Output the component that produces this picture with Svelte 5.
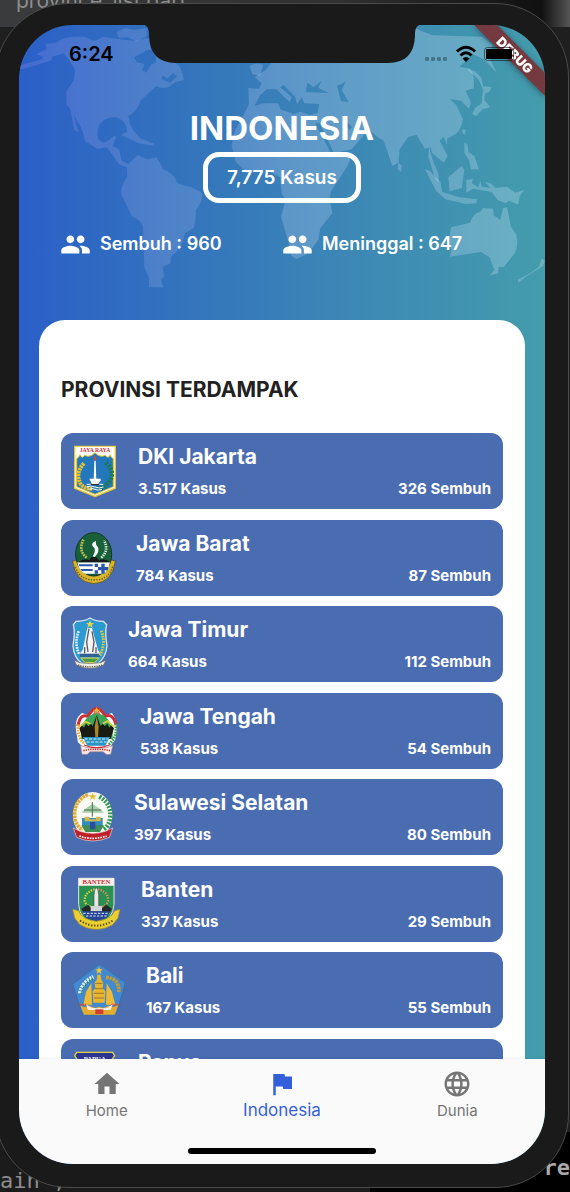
<script>
  const provinces = [
    { id: 'jakarta', name: 'DKI Jakarta', cases: '3.517', healed: 326, w: 46, box: '36 42 138 162' },
    { id: 'jabar', name: 'Jawa Barat', cases: '784', healed: 87, w: 44, box: '36 302 132 162' },
    { id: 'jatim', name: 'Jawa Timur', cases: '664', healed: 112, w: 36, box: '36 45 108 162' },
    { id: 'jateng', name: 'Jawa Tengah', cases: '538', healed: 54, w: 48, box: '36 305 144 162' },
    { id: 'sulsel', name: 'Sulawesi Selatan', cases: '397', healed: 80, w: 42, box: '36 42 126 162' },
    { id: 'banten', name: 'Banten', cases: '337', healed: 29, w: 49, box: '36 301 147 162' },
    { id: 'bali', name: 'Bali', cases: '167', healed: 55, w: 54, box: '36 45 162 162' },
    { id: 'papua', name: 'Papua', cases: '124', healed: 26, w: 46, box: '36 303 138 162' }
  ];
  const tabs = [
    { label: 'Home', path: 'M10 20v-6h4v6h5v-8h3L12 3 2 12h3v8z' },
    { label: 'Indonesia', active: true, path: 'M14.4 6L14 4H5v17h2v-7h5.6l.4 2h7V6z' },
    { label: 'Dunia', path: 'M11.99 2C6.47 2 2 6.48 2 12s4.47 10 9.99 10C17.52 22 22 17.52 22 12S17.52 2 11.99 2zm6.93 6h-2.95c-.32-1.25-.78-2.45-1.38-3.56 1.84.63 3.37 1.91 4.33 3.56zM12 4.04c.83 1.2 1.48 2.53 1.91 3.96h-3.82c.43-1.43 1.08-2.76 1.91-3.96zM4.26 14C4.1 13.36 4 12.69 4 12s.1-1.36.26-2h3.38c-.08.66-.14 1.32-.14 2 0 .68.06 1.34.14 2H4.26zm.82 2h2.95c.32 1.25.78 2.45 1.38 3.56-1.84-.63-3.37-1.9-4.33-3.56zm2.95-8H5.08c.96-1.66 2.49-2.93 4.33-3.56C8.81 5.55 8.35 6.75 8.03 8zM12 19.96c-.83-1.2-1.48-2.53-1.91-3.96h3.82c-.43 1.43-1.08 2.76-1.91 3.96zM14.34 14H9.66c-.09-.66-.16-1.32-.16-2 0-.68.07-1.35.16-2h4.68c.09.65.16 1.32.16 2 0 .68-.07 1.34-.16 2zm.25 5.56c.6-1.11 1.06-2.31 1.38-3.56h2.95c-.96 1.65-2.49 2.93-4.33 3.56zM16.36 14c.08-.66.14-1.32.14-2 0-.68-.06-1.34-.14-2h3.38c.16.64.26 1.31.26 2s-.1 1.36-.26 2h-3.38z' }
  ];
  const totals = [['Sembuh', 960], ['Meninggal', 647]];
</script>

{#snippet emblem(id)}
  {#if id === 'jakarta'}
    <path d="M42 47H168V176L105 202L42 176Z" fill="#e8c52b" />
    <path d="M46 50H164V173L105 197L46 173Z" fill="#fff" />
    <path d="M50 86Q56 84 60 74Q66 88 74 76Q90 84 105 68Q120 84 136 76Q146 88 150 74Q154 84 160 86V170L105 193L50 170Z" fill="#2377bd" stroke="#e8c52b" stroke-width="3" />
    <text x="105" y="65" text-anchor="middle" font-size="17" class="tiny" fill="#d22b35">JAYA RAYA</text>
    <path d="M72 100Q44 130 62 162Q76 178 98 176" fill="none" stroke="#e3c135" stroke-width="12" stroke-dasharray="7 2" />
    <path d="M138 98Q168 126 146 158Q130 176 112 176" fill="none" stroke="#1d7a4b" stroke-width="14" stroke-dasharray="6 4" />
    <path d="M101 150L103 92H107L109 150ZM88 146H122V152L114 162H96Z" fill="#fff" />
    <path d="M105 76L109 86L105 93L101 86Z" fill="#d9452e" />
    <path d="M80 163H130M80 171Q92 165 105 171T130 171M86 178Q96 173 105 178T126 178" stroke="#fff" stroke-width="3" fill="none" />
    <path d="M92 164H118" stroke="#333" stroke-width="4" />
  {:else if id === 'jabar'}
    <path d="M38 392Q46 456 102 460Q158 456 166 392L150 388Q144 434 102 436Q58 434 54 388Z" fill="#d7b52c" stroke="#4d4317" stroke-width="2" />
    <ellipse cx="101" cy="372" rx="54" ry="65" fill="#176038" stroke="#17351f" stroke-width="3" />
    <path d="M52 396H150Q146 420 130 430H74Q56 420 52 396Z" fill="#fff" />
    <path d="M56 402H98V408H58ZM61 416H98V422H66ZM104 400H114V410H124V400H134V410H144V420H134V430H124V420H114V430H104V420H114V410H104Z" fill="#2956a8" />
    <path d="M54 396Q74 382 88 390L94 380H108L118 390Q134 382 150 396Z" fill="#18191b" />
    <path d="M98 378Q112 358 98 348Q92 338 108 332Q106 344 114 350Q120 364 104 380Z" fill="#fff" />
    <path d="M80 382Q54 362 70 328" fill="none" stroke="#c4c653" stroke-width="8" stroke-dasharray="5 3" />
    <path d="M124 382Q148 360 132 330" fill="none" stroke="#e7efe5" stroke-width="8" stroke-dasharray="4 3" />
    <path d="M46 410Q58 448 102 449T158 408" fill="none" stroke="#6a5a1e" stroke-width="4" stroke-dasharray="4 4" />
  {:else if id === 'jatim'}
    <path d="M90 48Q106 58 130 58L140 68Q134 90 141 132Q138 166 114 184H66Q42 168 39 132Q46 90 40 68L48 58Q74 58 90 48Z" fill="#2b9ad2" stroke="#dce6ed" stroke-width="4" />
    <path d="M90 54L93 63H102L95 69L98 78L90 72L82 78L85 69L78 63H87Z" fill="#e6d64d" />
    <path d="M82 78H96L114 144L122 156H58L68 144Z" fill="#f4f4f3" />
    <path d="M87 80L80 120L84 150M96 88L102 120L98 150M74 136V154M108 136V154" stroke="#595b63" stroke-width="4" fill="none" />
    <path d="M60 155H120V165H60Z" fill="#32619a" />
    <path d="M62 168H118L104 182H76Z" fill="#4e9b48" stroke="#e9dc52" stroke-width="3" />
    <path d="M56 88Q42 124 58 158" fill="none" stroke="#eef1ec" stroke-width="8" stroke-dasharray="5 3" />
    <path d="M124 86Q138 124 120 160" fill="none" stroke="#d8c93c" stroke-width="9" stroke-dasharray="5 3" />
    <path d="M42 174L58 182Q90 188 122 182L138 174L130 190Q90 208 50 190Z" fill="#f2efe6" stroke="#6b6658" stroke-width="2" />
    <path d="M54 189Q90 200 126 189" fill="none" stroke="#5d5546" stroke-width="4" stroke-dasharray="4 3" />
  {:else if id === 'jateng'}
    <path d="M50 396Q40 350 66 332L84 338L110 316L138 338L156 332Q178 360 166 412L148 436H72L54 420Z" fill="#fff" />
    <path d="M54 372Q60 332 84 342Q100 316 110 320Q120 316 136 342Q160 332 168 368" fill="none" stroke="#cd2d36" stroke-width="9" />
    <path d="M64 386Q68 342 110 332Q152 342 158 386V410H62Z" fill="#38a858" />
    <path d="M110 312L114 321H124L116 327L119 336L110 330L101 336L104 327L96 321H106Z" fill="#e2b937" stroke="#c32c31" stroke-width="2" />
    <path d="M58 378L66 368L72 376L78 364L86 372L92 362L98 372L110 338L122 372L128 362L134 372L142 364L148 376L154 368L162 378L152 410H68Z" fill="#191a12" />
    <path d="M58 374L76 358L92 364M128 364L142 356L162 374" fill="none" stroke="#e5cf38" stroke-width="5" />
    <path d="M106 404L104 374L110 340L116 374L114 404Z" fill="#a58725" />
    <path d="M68 404H150L136 430H82Z" fill="#2893c5" />
    <path d="M74 410H146M80 419H140" stroke="#d7f0f3" stroke-width="3" stroke-dasharray="9 4" />
    <path d="M54 366Q52 412 76 424" fill="none" stroke="#e2aa3a" stroke-width="9" stroke-dasharray="5 3" />
    <path d="M168 364Q172 410 146 426" fill="none" stroke="#3a9c51" stroke-width="9" stroke-dasharray="5 3" />
    <path d="M62 430L84 436H136L158 430L152 456H138L130 448H90L82 456H66Z" fill="#f6ece8" stroke="#ba8b86" stroke-width="2" />
    <path d="M70 445L90 441H130L150 445" fill="none" stroke="#be3237" stroke-width="5" stroke-dasharray="4 3" />
    <path d="M72 428Q110 444 148 428" fill="none" stroke="#cc3034" stroke-width="4" />
  {:else if id === 'sulsel'}
    <ellipse cx="98" cy="118" rx="59" ry="70" fill="#faf9f4" />
    <path d="M84 56Q40 74 44 122Q46 148 68 162" fill="none" stroke="#dfac35" stroke-width="11" stroke-dasharray="8 2" />
    <path d="M118 62Q158 84 150 130Q146 150 130 160" fill="none" stroke="#2f9a51" stroke-width="14" stroke-dasharray="6 4" />
    <path d="M98 50L101 58H110L103 64L106 72L98 67L90 72L93 64L86 58H95Z" fill="#e7bd33" />
    <path d="M64 110L84 92L98 84L116 96L132 110Z" fill="#a5cfa9" />
    <path d="M97 78V122M72 102H124" stroke="#4a6c56" stroke-width="3" />
    <path d="M66 126H128V150H66Z" fill="#328dc1" />
    <path d="M74 122H88V130H108V122H122V136H74Z" fill="#d6b74b" />
    <path d="M64 148H132L120 168H76Z" fill="#3f8e54" />
    <path d="M90 138H106V160H90Z" fill="#2d4d9d" />
    <path d="M40 156L60 166Q98 178 136 166L158 156L148 184Q98 206 50 184Z" fill="#bd2028" stroke="#f2d8d2" stroke-width="2" />
    <path d="M58 180Q98 194 140 180" fill="none" stroke="#fff" stroke-width="5" stroke-dasharray="5 3" />
  {:else if id === 'banten'}
    <path d="M56 305H162V384Q160 430 109 444Q58 430 56 384Z" fill="#2a9151" stroke="#e7e5d9" stroke-width="3" />
    <path d="M56 305H162V327H56Z" fill="#f7f3ec" />
    <text x="109" y="323" text-anchor="middle" font-size="20" class="tiny" fill="#cc3038">BANTEN</text>
    <path d="M104 338Q74 346 74 372Q78 388 98 392" fill="none" stroke="#ded545" stroke-width="7" stroke-dasharray="4 4" />
    <path d="M114 338Q146 346 144 372Q140 388 122 392" fill="none" stroke="#e98b6b" stroke-width="7" stroke-dasharray="4 4" />
    <path d="M64 396L84 384L96 396H124L138 384L156 396L148 410H72Z" fill="#242927" />
    <path d="M104 340L109 332L114 340L116 356V398H102V356Z" fill="#e8e8e6" stroke="#555" stroke-width="2" />
    <path d="M92 388H126V404H92Z" fill="#d2d6d8" />
    <path d="M66 404H150L140 424L109 434L78 424Z" fill="#27469a" />
    <path d="M70 410H148M78 418H140" stroke="#e7ebee" stroke-width="3" stroke-dasharray="7 4" />
    <path d="M38 398L56 402Q64 428 109 434Q154 428 164 402L180 398L174 424L158 444Q109 472 60 444L44 424Z" fill="#e9cf32" stroke="#a58d24" stroke-width="2" />
    <path d="M60 432Q109 462 158 432" fill="none" stroke="#514914" stroke-width="6" stroke-dasharray="4 5" />
  {:else if id === 'bali'}
    <path d="M118 48L197 104L168 201H68L38 108Z" fill="#4389cf" stroke="#3a6ea5" stroke-width="3" />
    <path d="M117 56L120 64H128L122 70L124 78L117 73L110 78L112 70L106 64H114Z" fill="#f0c636" />
    <path d="M60 136Q66 104 100 86" fill="none" stroke="#e9f3ed" stroke-width="12" stroke-dasharray="6 3" />
    <path d="M64 138Q70 108 102 90" fill="none" stroke="#268052" stroke-width="5" stroke-dasharray="5 4" />
    <path d="M138 88Q180 92 176 132" fill="none" stroke="#c69b34" stroke-width="11" stroke-dasharray="8 2" />
    <path d="M112 80H122L124 96L130 104L128 120L136 130L134 164H100L98 130L106 120L104 104L110 96Z" fill="#e9b52f" />
    <path d="M94 106L96 170H70L78 132ZM140 106L138 170H166L156 132Z" fill="#edbb36" />
    <path d="M106 106H128M104 122H130M102 136H132M102 150H132" stroke="#9b7528" stroke-width="3" />
    <path d="M60 170Q74 184 88 172Q102 184 118 176Q134 184 148 172Q160 184 176 168L164 200H72Z" fill="#e5ac30" />
    <path d="M58 170H80M154 170H176" stroke="#d84a31" stroke-width="6" stroke-dasharray="6 3" />
    <path d="M78 168Q92 184 118 180Q144 184 158 168L152 186H84Z" fill="#f5f0e7" />
    <path d="M106 184H130V198H106Z" fill="#d7392c" />
  {:else}
    <path d="M50 310H158L164 320L156 332V420L104 452L52 420V332L44 320Z" fill="#2c3590" stroke="#e4d34a" stroke-width="4" />
    <text x="104" y="336" text-anchor="middle" font-size="20" class="tiny" fill="#fff">PAPUA</text>
  {/if}
{/snippet}

<div class="desk">
  <span class="back top">province_list.dart</span>
  <span class="back left">ain ,</span>
  <span class="back right">re</span>
  <div class="phone">
    <div class="screen">
      <header>
        <svg class="map" viewBox="0 15 1578 850" aria-hidden="true">
          <defs>
            <linearGradient id="land" gradientUnits="userSpaceOnUse" x1="0" y1="0" x2="1578" y2="0">
              <stop offset="0" stop-color="#8f90ea" stop-opacity=".26" />
              <stop offset=".3" stop-color="#b7c3f4" stop-opacity=".2" />
              <stop offset=".5" stop-color="#bcd0f6" stop-opacity=".27" />
              <stop offset="1" stop-color="#d0ecf8" stop-opacity=".28" />
            </linearGradient>
          </defs>
          <g fill="url(#land)" fill-rule="evenodd">
            <path d="M0 137L68 118L73 110L52 103L82 88L80 72L112 68Q145 42 200 52L228 64L252 50L300 58L345 62L388 54L440 100L470 128Q490 140 494 180L470 186L450 200Q425 208 412 198L366 240Q355 275 328 288Q332 312 342 330L362 354L405 371V377L360 370L306 345L325 335Q322 300 290 292Q262 292 250 304Q232 320 236 354Q250 374 265 364L285 348L292 351L280 378L300 388L308 422L328 432L356 405L385 418L412 412Q425 430 432 448Q465 458 474 488Q500 500 515 500L548 518Q554 540 530 570Q532 600 524 624L498 640Q490 670 484 684L462 705L455 712V730L430 740L436 768L426 780L433 802H390V774L376 740L372 618Q364 600 338 588Q330 570 307 522Q304 500 325 470L324 442L300 433L274 395L262 382L235 387L198 362L190 330L164 285L179 337L166 330L154 268L142 250V215L165 180L168 150L150 120L135 100L100 110L95 122L12 147H0ZM346 112L380 92L412 84L410 128L398 132L382 158L370 150L376 132L352 126ZM430 166L445 176L462 160L474 168L454 188L428 178Z" />
            <path d="M292 36L320 24L345 30L384 24L382 50L352 64L326 52L300 54Z" />
            <path d="M688 204L720 206L728 190L708 172L740 150L758 128L800 100L1188 25L1240 46L1390 50L1420 75L1410 110L1433 158L1395 118L1360 102L1322 140L1352 146Q1368 160 1364 205L1340 212L1356 248L1350 266L1326 242L1292 236L1312 256L1332 298Q1326 330 1310 342L1284 356V374L1274 350L1262 362L1286 408L1274 428L1240 400L1234 382L1218 386L1193 345L1168 350L1142 388L1138 428L1120 438L1094 362L1074 350L1053 330L1030 350L998 388L944 400L994 400Q996 420 984 440L936 514L932 540L940 580L904 624L898 660L868 700L832 717L818 708L804 650L786 590L800 540L788 520L784 472L742 450L684 460L650 425L638 376L648 330L674 284L690 252ZM706 258L724 225L744 208L772 208L812 246L818 232L784 202L794 195L828 230L834 252L848 232L856 250L900 252L896 280L872 285L844 275L824 283L784 268L778 250L732 250ZM860 216L865 188L884 202L907 183L898 203L928 219ZM954 198L980 185L968 210L989 246L966 244ZM888 310L902 310L944 398L934 396ZM970 292L1000 322L990 330Z" />
            <path d="M692 140Q702 126 732 134L724 168L700 162Z" />
            <path d="M1340 144L1368 154L1388 174L1392 198L1418 202L1412 214L1398 222L1396 240L1414 262L1390 268L1372 288L1360 282L1368 264L1388 250L1392 210L1380 180Z" />
            <path d="M1330 328L1340 330L1338 344L1330 340ZM1336 368L1346 374L1348 396L1366 408L1380 448L1356 448L1350 420L1336 398ZM1138 428L1148 436L1146 456L1136 448Z" />
            <path d="M1218 448L1232 452L1264 486L1270 516L1320 532L1374 538L1372 550L1340 552L1280 538L1252 514ZM1288 472L1328 438L1336 450L1328 504L1292 514ZM1342 480L1362 476L1358 490L1378 502L1384 482L1388 500L1414 504L1398 486L1414 490L1430 504L1464 500L1488 518L1516 510L1502 528L1498 554L1470 542L1460 550L1436 540L1418 516L1362 506L1342 518Z" />
            <path d="M1230 380L1244 430L1258 460L1260 486L1250 480L1228 410Z" />
            <path d="M1296 622L1354 608Q1360 580 1384 575L1392 564L1422 566L1424 586L1444 600L1452 564L1464 562L1476 620L1492 644Q1500 680 1484 704L1454 742L1438 740L1438 760L1412 766L1426 750L1412 712L1386 696L1292 710L1298 690L1290 660Z" />
            <path d="M1568 715L1577 722L1572 738L1518 772L1498 788L1496 780L1536 758L1560 740Z" />
          </g>
        </svg>

        <svg class="notch" viewBox="0 0 282 39" aria-hidden="true">
          <path d="M0 0Q8 1 8 9V12Q9 39 35 39H247Q273 39 274 12V9Q274 1 282 0Z" fill="#1a1a1a" />
        </svg>

        <svg class="debug" viewBox="0 0 76 76" role="img" aria-label="DEBUG">
          <path d="M5 0H28L76 48V71Z" fill="#743a40" />
          <text x="46" y="35" class="ribbon" text-anchor="middle" transform="rotate(45 46 30)">DEBUG</text>
        </svg>

        <div class="status">
          <time>6:24</time>
          <svg viewBox="0 0 92 20" aria-hidden="true">
            <g fill="#000" fill-opacity=".3"><rect x="1" y="13" width="4" height="4" rx="1" /><rect x="7" y="13" width="4" height="4" rx="1" /><rect x="13" y="13" width="4" height="4" rx="1" /><rect x="19" y="13" width="4" height="4" rx="1" /></g>
            <g fill="none" stroke="#000" stroke-width="3"><path d="M33 7.500Q42 -1 51 7.500" /><path d="M36.500 11.500Q42 6 47.500 11.500" /></g>
            <path d="M38.500 14.500Q42 11.500 45.500 14.500L42 18Z" />
            <rect x="60.500" y="3.500" width="29" height="13" rx="3" fill="none" stroke="#000" stroke-opacity=".5" />
            <rect x="62" y="5" width="26" height="10" rx="1" />
          </svg>
        </div>

        <h1>INDONESIA</h1>
        <p class="pill">7,775 Kasus</p>
        <ul class="totals">
          {#each totals as [label, count]}
            <li>
              <svg viewBox="0 0 24 24" aria-hidden="true"><path d="M16 11c1.66 0 2.99-1.34 2.99-3S17.66 5 16 5c-1.66 0-3 1.34-3 3s1.34 3 3 3zm-8 0c1.66 0 2.99-1.34 2.99-3S9.66 5 8 5C6.34 5 5 6.34 5 8s1.34 3 3 3zm0 2c-2.33 0-7 1.17-7 3.5V19h14v-2.5c0-2.33-4.67-3.5-7-3.5zm8 0c-.29 0-.62.02-.97.05 1.16.84 1.97 1.97 1.97 3.45V19h6v-2.5c0-2.33-4.67-3.5-7-3.5z" /></svg>
              {label} : {count}
            </li>
          {/each}
        </ul>
      </header>

      <main>
        <h2>PROVINSI TERDAMPAK</h2>
        <ul class="list">
          {#each provinces as p}
            <li>
              <svg style="width: {p.w}px" viewBox={p.box} aria-hidden="true">{@render emblem(p.id)}</svg>
              <div class="info">
                <h3>{p.name}</h3>
                <p><span>{p.cases} Kasus</span><span>{p.healed} Sembuh</span></p>
              </div>
            </li>
          {/each}
        </ul>
      </main>

      <nav>
        {#each tabs as t}
          <button type="button" class:active={t.active}>
            <svg viewBox="0 0 24 24" aria-hidden="true"><path d={t.path} /></svg>
            <span>{t.label}</span>
          </button>
        {/each}
        <i class="bar"></i>
      </nav>
    </div>
  </div>
</div>

<style>
  :global(body) { margin: 0; background: #1b1b1b; }
  h1, h2, h3, p, ul { margin: 0; padding: 0; list-style: none; }
  .desk {
    position: relative;
    display: flex;
    box-sizing: border-box;
    height: 100vh;
    padding: 3px 1px 4px 0;
    overflow: hidden;
    font-family: Inter, Roboto, sans-serif;
    background:
      linear-gradient(90deg, #3a3b3c, #303030 60%, #111 95%, #555) top / 100% 27px no-repeat,
      linear-gradient(90deg, #1b1b1b 65%, #000 65%) bottom / 100% 60px no-repeat,
      #1f1f1f;
  }
  .back { position: absolute; color: #8d8d8d; line-height: 24px; }
  .back.top { top: -11px; left: 16px; font-size: 21px; }
  .back.left { bottom: -1px; left: 0; font: 22px/24px "DejaVu Sans Mono", monospace; }
  .back.right { right: 0; bottom: 12px; font: bold 22px/24px "DejaVu Sans Mono", monospace; color: #aaa; }
  .phone {
    position: relative;
    display: flex;
    flex: 1;
    box-sizing: border-box;
    margin-left: -5px;
    padding: 21px 23px 23px;
    border: 1px solid #4a4a4a;
    border-radius: 74px;
    background: #1a1a1a;
  }
  .screen {
    display: flex;
    flex: 1;
    flex-direction: column;
    min-width: 0;
    overflow: hidden;
    border-radius: 54px;
    background: linear-gradient(90deg, #2b5fc8, #3373bd 30%, #3c87b6 62%, #449cac);
  }
  header {
    position: relative;
    display: flex;
    flex-direction: column;
    align-items: center;
    padding-bottom: 64px;
    color: #fff;
  }
  .map { position: absolute; top: 0; left: 0; width: 100%; }
  .notch { position: absolute; top: -1px; left: 50%; width: 282px; height: 39px; margin-left: -141px; }
  .debug { position: absolute; top: 0; right: 0; width: 76px; filter: drop-shadow(0 1px 3px #0006); }
  .ribbon { font: 900 13px Inter, sans-serif; fill: #fff; }
  .status {
    position: relative;
    display: flex;
    align-self: stretch;
    align-items: center;
    justify-content: space-between;
    height: 58px;
    margin-bottom: 25px;
    padding: 0 29px 0 50px;
    color: #000;
  }
  .status svg { width: 92px; height: 20px; }
  time { font-size: 20px; font-weight: 600; }
  h1 { position: relative; font-size: 33px; font-weight: 700; line-height: 40px; }
  .pill {
    position: relative;
    box-sizing: border-box;
    margin: 4px 0 29px;
    padding: 0 19px;
    border: 5px solid #fff;
    border-radius: 16px;
    font-size: 19px;
    font-weight: 600;
    line-height: 41px;
  }
  .totals {
    position: relative;
    display: grid;
    grid-template-columns: 1fr 1fr;
    align-self: stretch;
    padding: 0 41px;
    font-size: 18px;
    font-weight: 600;
    line-height: 24px;
  }
  .totals li { display: flex; align-items: center; gap: 9px; height: 24px; white-space: nowrap; }
  .totals svg { width: 31px; height: 31px; fill: #fff; }
  main {
    display: flex;
    flex: 1;
    flex-direction: column;
    min-height: 0;
    margin: 0 20px;
    padding: 55px 22px 0;
    overflow: hidden;
    box-sizing: border-box;
    border-radius: 26px 26px 0 0;
    background: #fff;
  }
  h2 { margin-bottom: 28px; color: #212121; font-size: 21px; font-weight: 700; line-height: 30px; }
  .list {
    display: flex;
    flex: 1;
    flex-direction: column;
    justify-content: space-between;
    gap: 10px;
    margin-bottom: -56px;
  }
  .list li {
    display: flex;
    flex: none;
    align-items: center;
    gap: 20px;
    height: 76px;
    padding: 0 12px 0 11px;
    border-radius: 12px;
    background: #4a6db2;
    color: #fff;
  }
  .list svg { flex: none; height: 54px; }
  .tiny { font-family: "Liberation Serif", serif; font-weight: 700; }
  .info { flex: 1; padding-top: 2px; }
  h3 { font-size: 21px; font-weight: 700; line-height: 34px; }
  .info p { display: flex; justify-content: space-between; font-size: 15px; font-weight: 700; line-height: 30px; }
  nav {
    position: relative;
    display: grid;
    grid-template-columns: repeat(3, 1fr);
    height: 105px;
    background: #fafafa;
    box-shadow: 0 -1px 2px #0000000f;
  }
  button {
    display: flex;
    flex-direction: column;
    align-items: center;
    padding: 10px 0 0;
    border: 0;
    background: none;
    color: #757575;
    font: 400 15px/24px Inter, sans-serif;
  }
  button svg { width: 30px; height: 30px; fill: currentColor; }
  .active { color: #335fdb; font-size: 17px; line-height: 22px; }
  .bar {
    position: absolute;
    bottom: 10px;
    left: 50%;
    width: 188px;
    height: 6px;
    margin-left: -94px;
    border-radius: 3px;
    background: #000;
  }
</style>
